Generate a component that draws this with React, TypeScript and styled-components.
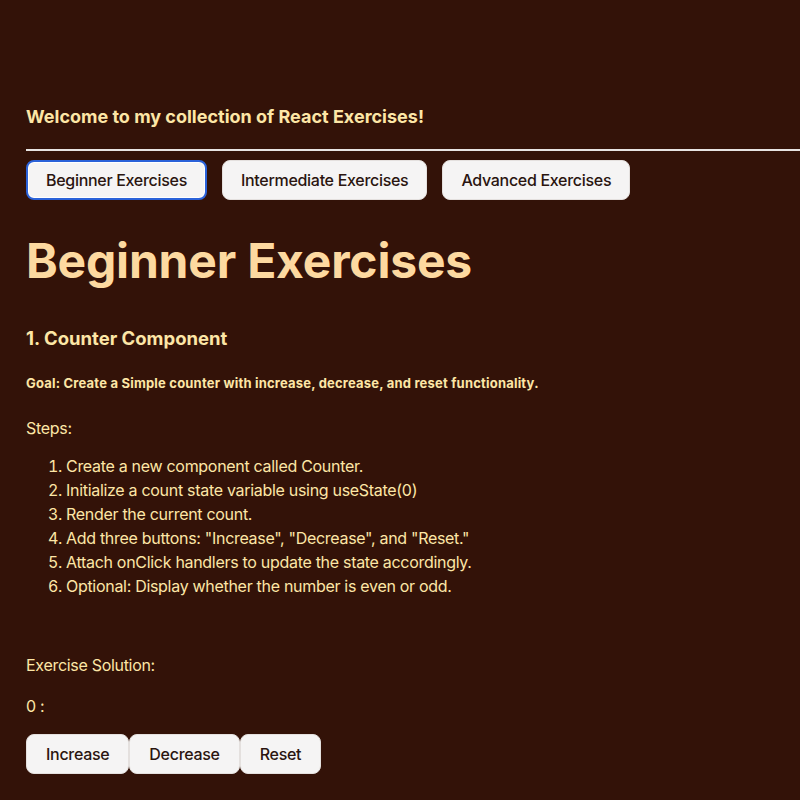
import React, { useState } from 'react';
import styled, { createGlobalStyle } from 'styled-components';

const GlobalStyle = createGlobalStyle`
  html, body {
    margin: 0;
    padding: 0;
    background: #331208;
  }
  body {
    font-family: Inter, "Noto Sans", sans-serif;
    color: #fde4a8;
    overflow: hidden;
  }
`;

const Page = styled.div`
  min-height: 800px;
  padding: 106px 0 0 26px;
  box-sizing: border-box;
  display: flex;
  flex-direction: column;
  align-items: flex-start;
`;

const Welcome = styled.h3`
  margin: 0;
  font-size: 18px;
  line-height: 22px;
  font-weight: 700;
  color: #fde6a6;
`;

const Divider = styled.hr`
  align-self: stretch;
  margin: 21px 0 0 0;
  border: none;
  height: 2px;
  background: #e8e4e2;
`;

const Tabs = styled.nav`
  display: flex;
  gap: 15px;
  margin-top: 9px;
`;

const Button = styled.button<{ $active?: boolean }>`
  height: 40px;
  padding: 0 19px;
  box-sizing: border-box;
  border-radius: 8px;
  background: #f5f4f4;
  color: #2a1510;
  font-family: Inter, "Noto Sans", sans-serif;
  font-size: 16px;
  font-weight: 500;
  letter-spacing: -0.3px;
  cursor: pointer;
  border: ${(p) => (p.$active ? '2px solid #2b62d9' : '1px solid #e4e0de')};
  box-shadow: ${(p) => (p.$active ? 'inset 0 0 0 1px #ffffff' : 'none')};
`;

const TabButton = styled(Button)`
  padding: 0 18px;
`;

const Title = styled.h1`
  margin: 32px 0 0 0;
  font-size: 48px;
  line-height: 58px;
  font-weight: 700;
  letter-spacing: -0.2px;
  color: #fdd9a0;
`;

const ExerciseName = styled.h2`
  margin: 36px 0 0 0;
  font-size: 18.5px;
  line-height: 24px;
  font-weight: 700;
  color: #fde6a6;
`;

const Goal = styled.h5`
  margin: 24px 0 0 0;
  font-size: 13px;
  line-height: 18px;
  font-weight: 700;
  letter-spacing: 0.2px;
  color: #fde6a6;
`;

const Text = styled.p<{ $gap: number }>`
  margin: ${(p) => p.$gap}px 0 0 0;
  font-size: 16px;
  line-height: 24px;
  letter-spacing: -0.3px;
  color: #fde6a6;
`;

const Steps = styled.ol`
  margin: 14px 0 0 0;
  padding-left: 40px;
  font-size: 16px;
  line-height: 24px;
  letter-spacing: -0.3px;
  color: #fde6a6;
`;

const Controls = styled.div`
  display: flex;
  margin-top: 16px;
`;

const steps = [
  'Create a new component called Counter.',
  'Initialize a count state variable using useState(0)',
  'Render the current count.',
  'Add three buttons: "Increase", "Decrease", and "Reset."',
  'Attach onClick handlers to update the state accordingly.',
  'Optional: Display whether the number is even or odd.',
];

export default function App() {
  const [tab, setTab] = useState('beginner');
  const [count, setCount] = useState(0);

  return (
    <>
      <GlobalStyle />
      <Page>
        <Welcome>Welcome to my collection of React Exercises!</Welcome>
        <Divider />
        <Tabs>
          <TabButton $active={tab === 'beginner'} onClick={() => setTab('beginner')}>
            Beginner Exercises
          </TabButton>
          <TabButton $active={tab === 'intermediate'} onClick={() => setTab('intermediate')}>
            Intermediate Exercises
          </TabButton>
          <TabButton $active={tab === 'advanced'} onClick={() => setTab('advanced')}>
            Advanced Exercises
          </TabButton>
        </Tabs>
        <Title>Beginner Exercises</Title>
        <ExerciseName>1. Counter Component</ExerciseName>
        <Goal>Goal: Create a Simple counter with increase, decrease, and reset functionality.</Goal>
        <Text $gap={24}>Steps:</Text>
        <Steps>
          {steps.map((s) => (
            <li key={s}>{s}</li>
          ))}
        </Steps>
        <Text $gap={55}>Exercise Solution:</Text>
        <Text $gap={17}>{count} :</Text>
        <Controls>
          <Button onClick={() => setCount(count + 1)}>Increase</Button>
          <Button onClick={() => setCount(count - 1)}>Decrease</Button>
          <Button onClick={() => setCount(0)}>Reset</Button>
        </Controls>
      </Page>
    </>
  );
}
